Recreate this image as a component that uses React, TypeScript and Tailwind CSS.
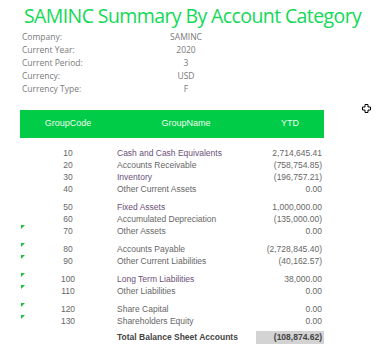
import React from 'react';

type Row = { code: string; name: string; ytd: string; mark?: boolean; tint?: boolean };

const info: [string, string][] = [
  ['Company:', 'SAMINC'],
  ['Current Year:', '2020'],
  ['Current Period:', '3'],
  ['Currency:', 'USD'],
  ['Currency Type:', 'F'],
];

const groups: Row[][] = [
  [
    { code: '10', name: 'Cash and Cash Equivalents', ytd: '2,714,645.41', tint: true },
    { code: '20', name: 'Accounts Receivable', ytd: '(758,754.85)' },
    { code: '30', name: 'Inventory', ytd: '(196,757.21)', tint: true },
    { code: '40', name: 'Other Current Assets', ytd: '0.00' },
  ],
  [
    { code: '50', name: 'Fixed Assets', ytd: '1,000,000.00', tint: true },
    { code: '60', name: 'Accumulated Depreciation', ytd: '(135,000.00)' },
    { code: '70', name: 'Other Assets', ytd: '0.00', mark: true },
  ],
  [
    { code: '80', name: 'Accounts Payable', ytd: '(2,728,845.40)', mark: true },
    { code: '90', name: 'Other Current Liabilities', ytd: '(40,162.57)', mark: true },
  ],
  [
    { code: '100', name: 'Long Term Liabilities', ytd: '38,000.00', mark: true, tint: true },
    { code: '110', name: 'Other Liabilities', ytd: '0.00', mark: true },
  ],
  [
    { code: '120', name: 'Share Capital', ytd: '0.00', mark: true },
    { code: '130', name: 'Shareholders Equity', ytd: '0.00', mark: true },
  ],
];

function DataRow({ row }: { row: Row }) {
  return (
    <div className="relative grid grid-cols-[96px_140px_68px] h-[12px] items-center leading-none">
      {row.mark && (
        <svg className="absolute left-[1px] top-0" width="4" height="4" viewBox="0 0 4 4">
          <polygon points="0,0 4,0 0,4" fill="#16c23a" />
        </svg>
      )}
      <span className="text-center">{row.code}</span>
      <span className={`pl-[1px] whitespace-nowrap ${row.tint ? 'text-[#6a4f78]' : ''}`}>{row.name}</span>
      <span className="text-right pr-[2px] whitespace-nowrap">{row.ytd}</span>
    </div>
  );
}

export default function App() {
  return (
    <div className="w-[380px] h-[348px] bg-white overflow-hidden relative">
      <h1 className="pl-[24px] text-[19.5px] leading-[31px] tracking-[-0.6px] whitespace-nowrap text-[#12d957] font-['Open_Sans',sans-serif]">
        SAMINC Summary By Account Category
      </h1>

      <div className="ml-[20px] font-['Open_Sans',sans-serif] text-[8.5px] text-[#7a7a7a]">
        {info.map(([label, value]) => (
          <div key={label} className="grid grid-cols-[96px_140px] h-[13px] items-center">
            <span className="pl-[2px]">{label}</span>
            <span className="text-center">{value}</span>
          </div>
        ))}
      </div>

      <div className="ml-[20px] mt-[14px] w-[304px] font-['Liberation_Sans',Arial,sans-serif] text-[8.5px] text-[#676767]">
        <div className="grid grid-cols-[96px_140px_68px] h-[28px] items-center bg-[#00cc47] text-[#eefaf1] text-[9px]">
          <span className="text-center">GroupCode</span>
          <span className="text-center">GroupName</span>
          <span className="text-center">YTD</span>
        </div>

        <div className="mt-[9px] flex flex-col gap-[6px]">
          {groups.map((g, i) => (
            <div key={i} className="flex flex-col">
              {g.map(r => (
                <DataRow key={r.code} row={r} />
              ))}
            </div>
          ))}
        </div>

        <div className="mt-[4px] grid grid-cols-[96px_140px_68px] h-[12px] items-center font-bold text-[#444]">
          <span />
          <span className="pl-[1px] whitespace-nowrap">Total Balance Sheet Accounts</span>
          <span className="h-full flex items-center justify-end pr-[2px] bg-[#d3d3d3]">(108,874.62)</span>
        </div>
      </div>

      <svg className="absolute left-[362px] top-[104px]" width="9" height="9" viewBox="0 0 9 9">
        <path d="M3 0.5h3v2.5h2.5v3H6v2.5H3V6H0.5V3H3z" fill="#fff" stroke="#000" strokeWidth="1" />
      </svg>
    </div>
  );
}
